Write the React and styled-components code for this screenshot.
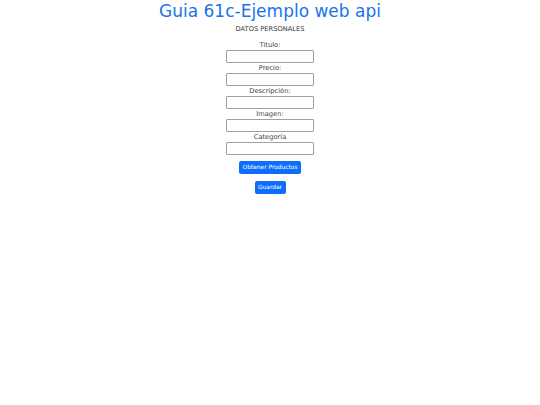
import React from "react";
import styled, { createGlobalStyle } from "styled-components";

const GlobalStyle = createGlobalStyle`
  body {
    margin: 0;
    background: #fff;
    font-family: "DejaVu Sans", sans-serif;
  }
`;

const fields = ["Titulo:", "Precio:", "Descripción:", "Imagen:", "Categoría"];

const App = () => {
  return (
    <Page>
      <GlobalStyle />
      <Title>Guia 61c-Ejemplo web api</Title>
      <Subtitle>DATOS PERSONALES</Subtitle>
      <Form>
        {fields.map((f) => (
          <Field key={f}>
            <Label>{f}</Label>
            <Input type="text" />
          </Field>
        ))}
        <Button type="button" $top={6}>Obtener Productos</Button>
        <Button type="button" $top={7}>Guardar</Button>
      </Form>
    </Page>
  );
};

export default App;

const Page = styled.div`
  display: flex;
  flex-direction: column;
  align-items: center;
  text-align: center;
`;

const Title = styled.h1`
  margin: 0;
  color: #1a73e8;
  font-size: 17px;
  font-weight: 400;
  line-height: 22px;
`;

const Subtitle = styled.div`
  margin-top: 2px;
  color: #333;
  font-size: 6.7px;
  line-height: 10px;
`;

const Form = styled.div`
  margin-top: 6px;
  display: flex;
  flex-direction: column;
  align-items: center;
`;

const Field = styled.div`
  display: flex;
  flex-direction: column;
  align-items: center;
`;

const Label = styled.label`
  height: 10px;
  color: #444;
  font-size: 6.7px;
  line-height: 11px;
`;

const Input = styled.input`
  box-sizing: border-box;
  width: 88px;
  height: 13px;
  margin: 0;
  padding: 0;
  border: 1px solid #a0a0a0;
  border-radius: 1px;
  background: #fff;
`;

const Button = styled.button`
  margin-top: ${(p) => p.$top}px;
  padding: 0 3.5px;
  height: 13px;
  border: none;
  border-radius: 2px;
  background: #0d6efd;
  color: #fff;
  font-family: "DejaVu Sans", sans-serif;
  font-size: 5.9px;
  line-height: 13px;
`;
